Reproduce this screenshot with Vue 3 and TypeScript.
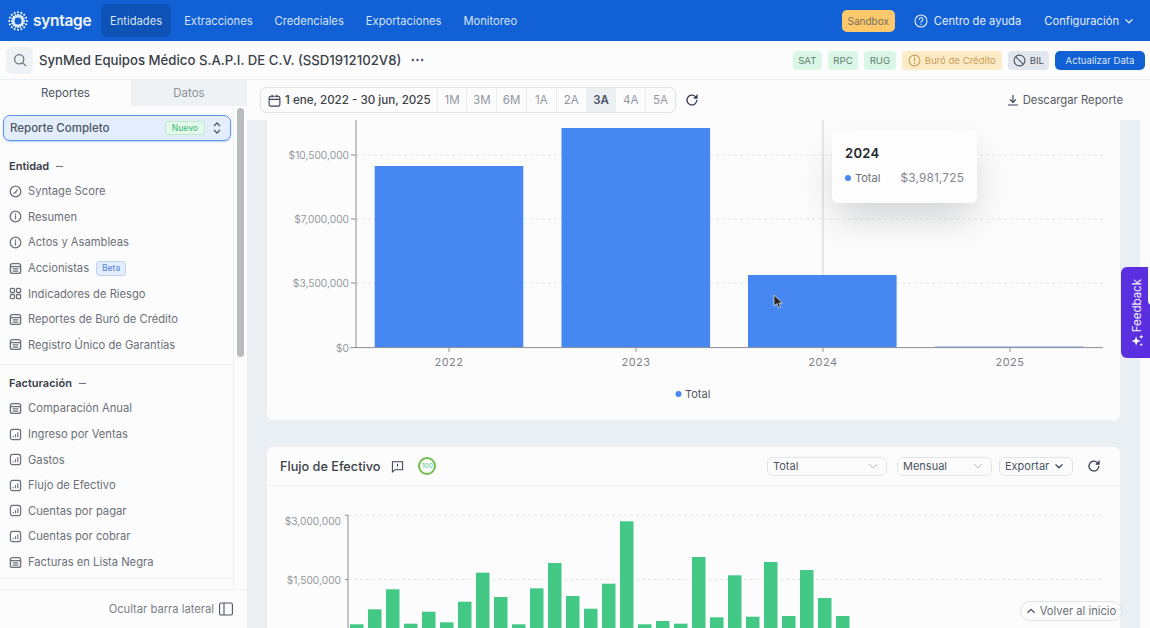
<script setup lang="ts">
type Item = { label: string; icon: string; badge?: string };

const navLinks = ['Entidades', 'Extracciones', 'Credenciales', 'Exportaciones', 'Monitoreo'];
const ranges = ['1M', '3M', '6M', '1A', '2A', '3A', '4A', '5A'];

const entidad: Item[] = [
  { label: 'Syntage Score', icon: 'gauge' },
  { label: 'Resumen', icon: 'info' },
  { label: 'Actos y Asambleas', icon: 'info' },
  { label: 'Accionistas', icon: 'table', badge: 'Beta' },
  { label: 'Indicadores de Riesgo', icon: 'grid' },
  { label: 'Reportes de Buró de Crédito', icon: 'table' },
  { label: 'Registro Único de Garantías', icon: 'table' },
];

const facturacion: Item[] = [
  { label: 'Comparación Anual', icon: 'table' },
  { label: 'Ingreso por Ventas', icon: 'chart' },
  { label: 'Gastos', icon: 'chart' },
  { label: 'Flujo de Efectivo', icon: 'chart' },
  { label: 'Cuentas por pagar', icon: 'chart' },
  { label: 'Cuentas por cobrar', icon: 'chart' },
  { label: 'Facturas en Lista Negra', icon: 'table' },
];

const yearBars = [
  { year: '2022', x: 374.7, top: 166, mid: 449 },
  { year: '2023', x: 561.5, top: 128, mid: 636 },
  { year: '2024', x: 748, top: 275, mid: 823 },
  { year: '2025', x: 935, top: 346.6, mid: 1010 },
];
const yearTicks = [
  { label: '$10,500,000', y: 155 },
  { label: '$7,000,000', y: 219 },
  { label: '$3,500,000', y: 283 },
];

// top edge of each monthly bar, in page px
const flowTops = [
  624.3, 609.3, 589.3, 623.7, 611.7, 622.3, 601.7, 572.7, 597, 624.3, 588.3, 563, 596, 608.7,
  583.7, 521.3, 624.3, 621, 623.7, 557, 617.3, 575.3, 616.7, 562, 616, 570, 598, 616,
];

const logoRays = Array.from({ length: 16 }, (_, i) => i * 22.5);
</script>

<template>
  <div class="app">
    <svg class="defs" width="0" height="0" aria-hidden="true">
      <symbol id="i-gauge" viewBox="0 0 14 14">
        <circle cx="7" cy="7" r="5.7" fill="none" stroke="currentColor" stroke-width="1.4" />
        <path d="M4.6 9.4 L9.6 4.4 L7.8 8.2 Z" fill="currentColor" stroke="currentColor" stroke-width=".6" />
      </symbol>
      <symbol id="i-info" viewBox="0 0 14 14">
        <circle cx="7" cy="7" r="5.7" fill="none" stroke="currentColor" stroke-width="1.4" />
        <path d="M7 6.4v3.2M7 4.2v.6" fill="none" stroke="currentColor" stroke-width="1.3" stroke-linecap="round" />
      </symbol>
      <symbol id="i-table" viewBox="0 0 14 14">
        <rect x="1.5" y="1.7" width="11" height="10.6" rx="2.2" fill="none" stroke="currentColor" stroke-width="1.5" />
        <path d="M1.8 5h10.4M4 7.4h6M4 9.8h6" fill="none" stroke="currentColor" stroke-width="1.3" />
      </symbol>
      <symbol id="i-grid" viewBox="0 0 14 14">
        <g fill="none" stroke="currentColor" stroke-width="1.4">
          <rect x="1.5" y="1.5" width="4.4" height="4.4" rx="1" />
          <rect x="8.1" y="1.5" width="4.4" height="4.4" rx="1" />
          <rect x="1.5" y="8.1" width="4.4" height="4.4" rx="1" />
          <rect x="8.1" y="8.1" width="4.4" height="4.4" rx="1" />
        </g>
      </symbol>
      <symbol id="i-chart" viewBox="0 0 14 14">
        <rect x="1.5" y="1.5" width="11" height="11" rx="2.4" fill="none" stroke="currentColor" stroke-width="1.3" />
        <path d="M4.5 10V8.6M7 10V6.8M9.5 10V4.6" fill="none" stroke="currentColor" stroke-width="1.2" />
      </symbol>
    </svg>

    <header class="topnav">
      <div class="brand">
        <svg class="brand-mark" width="20" height="20" viewBox="0 0 20 20">
          <g v-for="a in logoRays" :key="a" :transform="`rotate(${a} 10 10)`">
            <path d="M10 6.4V3" stroke="#fff" stroke-width="1.7" />
            <circle cx="10" cy="1.2" r="1" fill="#fff" />
          </g>
        </svg>
        <span class="brand-name">syntage</span>
      </div>
      <nav class="links">
        <a v-for="(l, i) in navLinks" :key="l" class="link" :class="{ active: i === 0 }">{{ l }}</a>
      </nav>
      <div class="topnav-right">
        <span class="sandbox">Sandbox</span>
        <a class="help">
          <svg width="14" height="14" viewBox="0 0 14 14" fill="none" stroke="currentColor" stroke-width="1.1">
            <circle cx="7" cy="7" r="6" />
            <path d="M5.3 5.4a1.8 1.8 0 1 1 2.7 1.6c-.6.3-1 .7-1 1.3M7 10v.4" stroke-linecap="round" />
          </svg>
          Centro de ayuda
        </a>
        <a class="config">
          Configuración
          <svg width="10" height="10" viewBox="0 0 10 10" fill="none" stroke="currentColor" stroke-width="1.3">
            <path d="M1.5 3.4 5 6.8l3.5-3.4" />
          </svg>
        </a>
      </div>
    </header>

    <div class="subbar">
      <button class="search">
        <svg width="14" height="14" viewBox="0 0 14 14" fill="none" stroke="#6b7280" stroke-width="1.3">
          <circle cx="6.2" cy="6.2" r="4.6" />
          <path d="m9.6 9.6 3 3" stroke-linecap="round" />
        </svg>
      </button>
      <h1 class="company">SynMed Equipos Médico S.A.P.I. DE C.V. (SSD1912102V8)</h1>
      <svg class="dots" width="13" height="4" viewBox="0 0 14 4" fill="#4b5563">
        <circle cx="2" cy="2" r="1.3" /><circle cx="7" cy="2" r="1.3" /><circle cx="12" cy="2" r="1.3" />
      </svg>
      <div class="chips">
        <span class="chip green">SAT</span>
        <span class="chip green">RPC</span>
        <span class="chip green">RUG</span>
        <span class="chip amber">
          <svg width="13" height="13" viewBox="0 0 14 14" fill="none" stroke="currentColor" stroke-width="1.2">
            <circle cx="7" cy="7" r="5.8" />
            <path d="M7 3.8v3.8M7 9.6v.5" stroke-linecap="round" />
          </svg>
          Buró de Crédito
        </span>
        <span class="chip gray">
          <svg width="13" height="13" viewBox="0 0 14 14" fill="none" stroke="currentColor" stroke-width="1.2">
            <circle cx="7" cy="7" r="5.8" />
            <path d="m3 3 8 8" />
          </svg>
          BIL
        </span>
        <button class="update">Actualizar Data</button>
      </div>
    </div>

    <div class="body">
      <aside class="sidebar">
        <div class="tabs">
          <div class="tab on">Reportes</div>
          <div class="tab">Datos</div>
        </div>
        <div class="side-main">
          <div class="side-scroll">
            <div class="report-select">
              <span class="report-name">Reporte Completo</span>
              <span class="nuevo">Nuevo</span>
              <svg width="10" height="14" viewBox="0 0 10 14" fill="none" stroke="#4b5563" stroke-width="1.3">
                <path d="M2 5 5 2l3 3M2 9l3 3 3-3" />
              </svg>
            </div>
            <section class="group first">
              <div class="group-title">Entidad <i class="dash"></i></div>
              <a v-for="it in entidad" :key="it.label" class="item">
                <svg class="item-icon" width="13" height="13"><use :href="`#i-${it.icon}`" /></svg>
                {{ it.label }}
                <span v-if="it.badge" class="beta">{{ it.badge }}</span>
              </a>
            </section>
            <section class="group last">
              <div class="group-title">Facturación <i class="dash"></i></div>
              <a v-for="it in facturacion" :key="it.label" class="item">
                <svg class="item-icon" width="13" height="13"><use :href="`#i-${it.icon}`" /></svg>
                {{ it.label }}
              </a>
            </section>
          </div>
          <div class="scroll-track"><div class="scroll-thumb"></div></div>
        </div>
        <div class="side-foot">
          Ocultar barra lateral
          <svg width="14" height="14" viewBox="0 0 14 14" fill="none" stroke="#4b5563" stroke-width="1.1">
            <rect x=".6" y="1" width="12.8" height="12" rx="1.6" />
            <path d="M5 1v12" />
          </svg>
        </div>
      </aside>

      <main class="main">
        <div class="toolbar">
          <div class="range-box">
            <div class="range-date">
              <svg width="13" height="13" viewBox="0 0 14 14" fill="none" stroke="#374151" stroke-width="1.2">
                <rect x="1.2" y="2.4" width="11.6" height="10.6" rx="1.8" />
                <path d="M1.2 5.8h11.6M4.4 .8v3M9.6 .8v3" />
              </svg>
              1 ene, 2022 - 30 jun, 2025
            </div>
            <span v-for="r in ranges" :key="r" class="range" :class="{ on: r === '3A' }">{{ r }}</span>
          </div>
          <svg class="reload" width="14" height="14" viewBox="0 0 14 14" fill="none" stroke="#374151" stroke-width="1.3">
            <path d="M11.8 7a4.9 4.9 0 1 1-1.4-3.4l1.5 1.4M12 1.6V5H8.7" />
          </svg>
          <a class="download">
            <svg width="12" height="12" viewBox="0 0 12 12" fill="none" stroke="#374151" stroke-width="1.1">
              <path d="M6 1v7M3 5.4 6 8.4l3-3M1 11h10" />
            </svg>
            Descargar Reporte
          </a>
        </div>

        <div class="content">
          <section class="card card-year">
            <svg class="plot" width="853" height="300" viewBox="267 120 853 300">
              <line v-for="t in yearTicks" :key="t.y" x1="356" :y1="t.y" x2="1103" :y2="t.y" class="grid-line" />
              <line x1="823" y1="120" x2="823" y2="347" class="cross" />
              <rect v-for="b in yearBars" :key="b.year" :x="b.x" :y="b.top" width="148.6" :height="347.6 - b.top" class="bar-blue" />
              <line x1="356" y1="120" x2="356" y2="347.6" class="axis" />
              <line x1="350" y1="347.6" x2="1103" y2="347.6" class="axis" />
              <g v-for="t in yearTicks" :key="t.label">
                <line x1="351" :y1="t.y" x2="356" :y2="t.y" class="axis" />
                <text x="349" :y="t.y + 4" text-anchor="end" class="tick">{{ t.label }}</text>
              </g>
              <text x="349" y="351.6" text-anchor="end" class="tick">$0</text>
              <g v-for="b in yearBars" :key="b.mid">
                <line :x1="b.mid" y1="347.6" :x2="b.mid" y2="352" class="axis" />
                <text :x="b.mid" y="366" text-anchor="middle" class="tick year">{{ b.year }}</text>
              </g>
              <circle cx="678.5" cy="394" r="3" fill="#4787f1" />
              <text x="685" y="398" class="legend">Total</text>
            </svg>
            <div class="tooltip">
              <div class="tooltip-title">2024</div>
              <div class="tooltip-row">
                <i class="tooltip-dot"></i>
                <span>Total</span>
                <span class="tooltip-value">$3,981,725</span>
              </div>
            </div>
            <svg class="cursor" width="11" height="15" viewBox="0 0 11 15">
              <path d="M1 1v11l2.8-2.4L5.6 14l2-.8-1.8-4.2H9.6Z" fill="#222" stroke="#ddd" stroke-width=".8" />
            </svg>
          </section>

          <section class="card card-flow">
            <header class="card-head">
              <h2 class="card-title">Flujo de Efectivo</h2>
              <svg class="note" width="13" height="13" viewBox="0 0 14 14" fill="none" stroke="#374151" stroke-width="1.1">
                <path d="M1.5 1.8h11v8.6H4.4l-2.9 2.4ZM7 4v3M7 8.4v.4" />
              </svg>
              <span class="score">100</span>
              <div class="head-tools">
                <div class="select wide">
                  Total
                  <svg width="10" height="10" viewBox="0 0 10 10" fill="none" stroke="#b8bec6" stroke-width="1"><path d="M1 3l4 4 4-4" /></svg>
                </div>
                <div class="select mid">
                  Mensual
                  <svg width="10" height="10" viewBox="0 0 10 10" fill="none" stroke="#b8bec6" stroke-width="1"><path d="M1 3l4 4 4-4" /></svg>
                </div>
                <div class="select export">
                  Exportar
                  <svg width="10" height="10" viewBox="0 0 10 10" fill="none" stroke="#374151" stroke-width="1.3"><path d="M1.5 3.4 5 6.8l3.5-3.4" /></svg>
                </div>
                <svg class="card-reload" width="14" height="14" viewBox="0 0 14 14" fill="none" stroke="#374151" stroke-width="1.3">
                  <path d="M11.8 7a4.9 4.9 0 1 1-1.4-3.4l1.5 1.4M12 1.6V5H8.7" />
                </svg>
              </div>
            </header>
            <svg class="plot" width="853" height="142" viewBox="267 486 853 142">
              <line x1="348" y1="515.3" x2="1103" y2="515.3" class="grid-line" />
              <line x1="348" y1="579.5" x2="1103" y2="579.5" class="grid-line" />
              <rect v-for="(top, i) in flowTops" :key="i" :x="350 + i * 18" :y="top" width="13.5" :height="628 - top" class="bar-green" />
              <line x1="348" y1="515" x2="348" y2="628" class="axis" />
              <line x1="345" y1="515.3" x2="348" y2="515.3" class="axis" />
              <line x1="345" y1="579.5" x2="348" y2="579.5" class="axis" />
              <text x="341" y="525" text-anchor="end" class="tick">$3,000,000</text>
              <text x="341" y="584" text-anchor="end" class="tick">$1,500,000</text>
            </svg>
          </section>

          <button class="back-top">
            <svg width="10" height="10" viewBox="0 0 10 10" fill="none" stroke="#4b5563" stroke-width="1.3"><path d="M1.5 6.8 5 3.4l3.5 3.4" /></svg>
            Volver al inicio
          </button>
        </div>
      </main>
      <div class="page-rail"></div>
    </div>

    <a class="feedback">
      <svg width="13" height="13" viewBox="0 0 14 14" fill="#fff">
        <path d="M5.5 2.5 6.8 6.2 10.5 7.5 6.8 8.8 5.5 12.5 4.2 8.8 .5 7.5 4.2 6.2ZM11 .5l.7 1.8 1.8.7-1.8.7-.7 1.8-.7-1.8L8.5 3l1.800-.7ZM11 9.5l.5 1.5 1.5.5-1.5.5-.5 1.5-.5-1.5-1.5-.5 1.5-.5Z" />
      </svg>
      <span>Feedback</span>
    </a>
    <div class="peek"></div>
  </div>
</template>

<style>
html,
body {
  margin: 0;
  background: #fcfcfc;
}
</style>

<style scoped>
.app {
  position: relative;
  width: 1150px;
  height: 628px;
  overflow: hidden;
  display: flex;
  flex-direction: column;
  font-family: Inter, 'Liberation Sans', sans-serif;
  color: #374151;
  background: #fcfcfc;
}

.defs {
  position: absolute;
}

/* top nav */
.topnav {
  flex: none;
  height: 41px;
  display: flex;
  align-items: center;
  padding: 0 16px 0 8px;
  box-sizing: border-box;
  background: #1160d5;
  color: #e3ecfa;
  font-size: 11.2px;
}

.brand {
  display: flex;
  align-items: center;
  gap: 5px;
  width: 93px;
}

.brand-name {
  font-size: 15.5px;
  font-weight: 600;
  color: #f2f6fd;
  letter-spacing: -0.3px;
}

.links {
  display: flex;
}

.link {
  height: 33px;
  display: flex;
  align-items: center;
  padding: 0 11px;
  border-radius: 6px;
  color: #d5e2f7;
}

.link.active {
  padding: 0 9px;
  background: #0e52b5;
  margin-right: 2px;
}

.topnav-right {
  margin-left: auto;
  display: flex;
  align-items: center;
}

.sandbox {
  width: 53px;
  height: 22px;
  display: flex;
  align-items: center;
  justify-content: center;
  background: #fbc96c;
  border-radius: 5px;
  font-size: 10px;
  color: #78705f;
}

.help {
  display: flex;
  align-items: center;
  gap: 6px;
  margin-left: 19px;
}

.config {
  display: flex;
  align-items: center;
  gap: 5px;
  margin-left: 23px;
}

/* entity bar */
.subbar {
  flex: none;
  height: 39px;
  display: flex;
  align-items: center;
  padding: 0 5px 0 6px;
  box-sizing: border-box;
  border-bottom: 1px solid #eceff1;
}

.search {
  width: 27px;
  height: 27px;
  display: flex;
  align-items: center;
  justify-content: center;
  padding: 0;
  border: 0;
  border-radius: 6px;
  background: #eef2f5;
}

.company {
  margin: 0 0 0 6px;
  font-size: 13.2px;
  font-weight: 500;
  color: #3a4048;
  white-space: nowrap;
}

.dots {
  margin-left: 10px;
}

.chips {
  margin-left: auto;
  display: flex;
  align-items: center;
  gap: 6px;
}

.chip {
  height: 19px;
  display: flex;
  align-items: center;
  gap: 4px;
  padding: 0 5px;
  border-radius: 4px;
  font-size: 9.6px;
}

.chip.green {
  padding: 0 5.5px;
  background: #d9f6e6;
  color: #5f7f6e;
}

.chip.amber {
  padding: 0 6px;
  background: #fcebc6;
  color: #c99f58;
}

.chip.gray {
  background: #e2e7ee;
  color: #4b5563;
}

.update {
  width: 90px;
  height: 19px;
  padding: 0;
  border: 0;
  border-radius: 5px;
  background: #1160d5;
  color: #dbe7f9;
  font: inherit;
  font-size: 9.6px;
}

/* layout */
.body {
  flex: 1;
  min-height: 0;
  display: flex;
}

/* sidebar */
.sidebar {
  flex: none;
  width: 247px;
  display: flex;
  flex-direction: column;
}

.tabs {
  flex: none;
  height: 26px;
  display: flex;
  font-size: 11.5px;
}

.tab {
  flex: 1;
  display: flex;
  align-items: center;
  justify-content: center;
  background: #eef2f4;
  color: #8b9097;
}

.tab:first-child {
  flex: none;
  width: 131px;
}

.tab.on {
  background: #fcfcfc;
  color: #4b5563;
}

.side-main {
  flex: 1;
  min-height: 0;
  display: flex;
  overflow: hidden;
}

.side-scroll {
  width: 234px;
  flex: none;
  box-sizing: border-box;
  padding: 9px 3px 0;
  border-right: 1px solid #eef0f2;
  overflow: hidden;
}

.report-select {
  height: 26px;
  display: flex;
  align-items: center;
  padding: 0 8px 0 6px;
  box-sizing: border-box;
  width: 228px;
  background: #e4edfb;
  border: 1.5px solid #5b95e8;
  border-radius: 7px;
  box-shadow: 0 1px 2px rgba(70, 130, 230, 0.35);
  font-size: 11.5px;
  font-weight: 500;
  color: #4b5563;
}

.report-name {
  flex: 1;
}

.nuevo {
  height: 12px;
  display: flex;
  align-items: center;
  padding: 0 6px;
  margin-right: 7px;
  font-size: 8.5px;
  color: #4cc17f;
  background: #e4f8ec;
  border: 1px solid #bde9cf;
  border-radius: 3px;
}

.group {
  margin: 0 -3px;
  padding: 0 0 6px 9px;
  border-bottom: 1px solid #eef0f2;
}

.group.first {
  margin-top: 16.5px;
}

.group.last {
  padding-bottom: 3px;
}

.group-title {
  height: 17px;
  display: flex;
  align-items: center;
  gap: 7px;
  font-size: 11px;
  font-weight: 600;
  color: #3a4048;
  margin: 10px 0 4px;
}

.group.first .group-title {
  margin-top: 0;
}

.dash {
  width: 7px;
  height: 1px;
  background: #6b7280;
}

.item {
  height: 25.6px;
  display: flex;
  align-items: center;
  gap: 6px;
  font-size: 11.2px;
  color: #6b7078;
  white-space: nowrap;
}

.item-icon {
  flex: none;
  color: #6b7078;
}

.beta {
  height: 13px;
  display: flex;
  align-items: center;
  margin-left: 1px;
  padding: 0 5px;
  font-size: 8.5px;
  color: #4f86db;
  background: #e4edfb;
  border: 1px solid #bcd3f3;
  border-radius: 3px;
}

.scroll-track {
  flex: 1;
  padding: 2px 3px 0;
}

.scroll-thumb {
  width: 7px;
  height: 249px;
  border-radius: 4px;
  background: #b9bcbf;
}

.side-foot {
  flex: none;
  height: 38px;
  display: flex;
  align-items: center;
  justify-content: flex-end;
  gap: 5px;
  padding: 0 14px 0 0;
  border-top: 1px solid #eef0f2;
  font-size: 11.2px;
  color: #7a7f86;
}

/* main column */
.main {
  flex: none;
  width: 893px;
  display: flex;
  flex-direction: column;
}

.toolbar {
  flex: none;
  height: 40px;
  display: flex;
  align-items: center;
  padding: 0 17px 0 13px;
  box-sizing: border-box;
  background: #fcfcfc;
}

.range-box {
  height: 26px;
  display: flex;
  align-items: stretch;
  box-sizing: border-box;
  border: 1px solid #e1e5e9;
  border-radius: 6px;
  overflow: hidden;
}

.range-date {
  display: flex;
  align-items: center;
  gap: 4px;
  padding: 0 6px 0 7px;
  font-size: 11.6px;
  font-weight: 500;
  color: #3a4048;
  white-space: nowrap;
}

.range {
  width: 28.8px;
  display: flex;
  align-items: center;
  justify-content: center;
  border-left: 1px solid #eceff1;
  font-size: 11.5px;
  color: #9096a0;
}

.range.on {
  background: #edf0f3;
  color: #4b5563;
  font-weight: 600;
}

.reload {
  margin-left: 9px;
}

.download {
  margin-left: auto;
  display: flex;
  align-items: center;
  gap: 4px;
  font-size: 11.3px;
  color: #555b63;
}

.content {
  position: relative;
  flex: 1;
  min-height: 0;
  overflow: hidden;
  display: flex;
  flex-direction: column;
  gap: 27px;
  padding-left: 20px;
  padding-right: 20px;
  background: #e9eff3;
}

.card {
  position: relative;
  flex: none;
  width: 853px;
  background: #fcfcfc;
}

.card-year {
  height: 300px;
  border-radius: 0 0 6px 6px;
}

.card-flow {
  border-radius: 6px 6px 0 0;
}

.plot {
  display: block;
}

.grid-line {
  stroke: #e4e5e7;
  stroke-width: 1;
  stroke-dasharray: 3 3;
}

.axis {
  stroke: #8d9196;
  stroke-width: 1;
}

.cross {
  stroke: #cfd2d5;
  stroke-width: 1;
}

.bar-blue {
  fill: #4787f1;
}

.bar-green {
  fill: #43c886;
}

.tick {
  font-size: 10.2px;
  fill: #94989d;
}

.tick.year {
  font-size: 11px;
  fill: #7f8389;
  letter-spacing: 0.5px;
}

.legend {
  font-size: 11px;
  fill: #555b63;
}

.tooltip {
  position: absolute;
  left: 565px;
  top: 10px;
  width: 145px;
  height: 73px;
  box-sizing: border-box;
  padding: 15px 13px 0;
  background: #fdfdfd;
  border-radius: 6px;
  box-shadow: 0 18px 36px -4px rgba(40, 45, 55, 0.2);
}

.tooltip-title {
  font-size: 13px;
  font-weight: 600;
  color: #23272c;
  letter-spacing: 0.3px;
}

.tooltip-row {
  display: flex;
  align-items: center;
  margin-top: 10px;
  font-size: 11px;
  color: #6b7078;
}

.tooltip-dot {
  width: 6px;
  height: 6px;
  margin-right: 4px;
  border-radius: 50%;
  background: #4787f1;
}

.tooltip-value {
  margin-left: auto;
  font-size: 11.8px;
  color: #83878d;
  letter-spacing: 0.2px;
}

.cursor {
  position: absolute;
  left: 506px;
  top: 174px;
}

.card-head {
  height: 39px;
  display: flex;
  align-items: center;
  padding: 0 19px 0 13px;
  box-sizing: border-box;
  border-bottom: 1px solid #eef0f2;
}

.card-title {
  margin: 0;
  font-size: 12.7px;
  font-weight: 500;
  color: #3a4048;
}

.note {
  margin-left: 11px;
}

.score {
  width: 18px;
  height: 18px;
  margin-left: 14px;
  display: flex;
  align-items: center;
  justify-content: center;
  box-sizing: border-box;
  border: 2px solid #72bd4c;
  border-radius: 50%;
  font-size: 6.5px;
  color: #43c886;
}

.head-tools {
  margin-left: auto;
  display: flex;
  align-items: center;
}

.select {
  height: 19px;
  display: flex;
  align-items: center;
  justify-content: space-between;
  box-sizing: border-box;
  padding: 0 8px 0 5px;
  border: 1px solid #e1e5e9;
  border-radius: 6px;
  font-size: 11px;
  color: #4b5563;
}

.select.wide {
  width: 120px;
  margin-right: 10px;
}

.select.mid {
  width: 95px;
  margin-right: 7px;
}

.select.export {
  width: 74px;
}

.card-reload {
  margin-left: 14px;
}

.back-top {
  position: absolute;
  left: 773px;
  top: 481px;
  width: 102px;
  height: 20px;
  display: flex;
  align-items: center;
  justify-content: center;
  gap: 4px;
  padding: 0;
  background: #fcfcfc;
  border: 1px solid #dfe3e7;
  border-radius: 10px;
  font: inherit;
  font-size: 11.2px;
  color: #6b7078;
}

.page-rail {
  flex: 1;
  background: #fbfbfb;
}

.feedback {
  position: absolute;
  left: 1121px;
  top: 267px;
  width: 29px;
  height: 91px;
  box-sizing: border-box;
  padding: 0 0 11px 3px;
  display: flex;
  flex-direction: column-reverse;
  align-items: center;
  justify-content: flex-start;
  gap: 2px;
  background: #5a2fe0;
  border-radius: 6px 0 0 6px;
  color: #f3f0fd;
  font-size: 11.5px;
}

.feedback span {
  writing-mode: vertical-rl;
  transform: rotate(180deg);
}

.peek {
  position: absolute;
  left: 1148px;
  top: 255px;
  width: 6px;
  height: 50px;
  background: #f7f8f9;
  border-radius: 4px 0 0 4px;
}
</style>
